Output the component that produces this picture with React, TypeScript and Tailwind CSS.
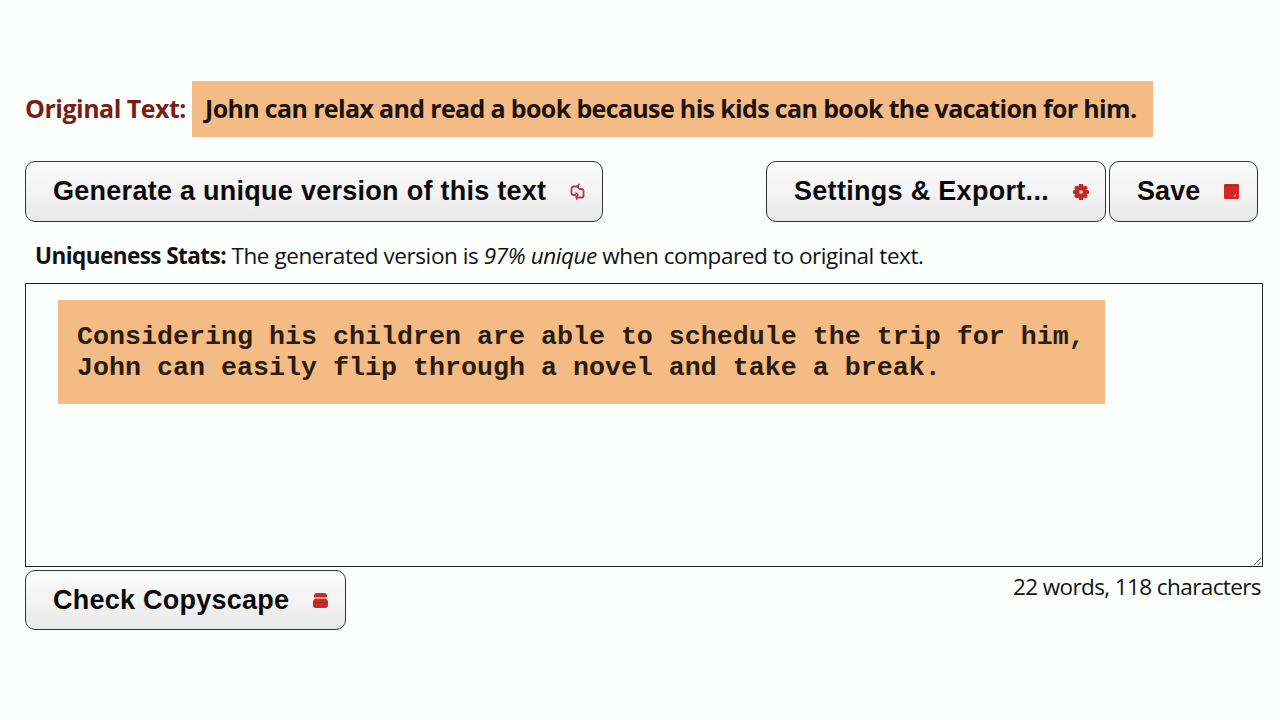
import type { ReactNode } from 'react';

const BTN =
  'flex items-center justify-between h-full rounded-[10px] border border-[#333] bg-gradient-to-b from-[#fbfbfb] via-[#f3f3f3] to-[#e9e9e9] font-["Liberation_Sans",Arial,sans-serif] font-bold text-[27px] text-[#0a0a0a]';

function RefreshIcon() {
  return (
    <svg width="15" height="18" viewBox="0 0 15 18" fill="none" stroke="#b5383c" strokeWidth="1.800">
      <path d="M9 3.500H3.500a2 2 0 0 0-2 2V10a2 2 0 0 0 2 2H6" />
      <path d="M6 14.500h5.500a2 2 0 0 0 2-2V8a2 2 0 0 0-2-2H9" />
      <path d="M9.500 1 7 3.500l2.500 2.500" strokeWidth="1.500" />
      <path d="M5.500 9.500 8 12l-2.500 2.500" strokeWidth="1.500" />
      <path d="M6 14.500 7 17" strokeWidth="1.200" />
    </svg>
  );
}

function GearIcon() {
  return (
    <svg width="16" height="16" viewBox="0 0 16 16">
      <path
        fill="#c02b27"
        fillRule="evenodd"
        d="M6 0h4l.5 2.400 2.200-1 2.100 2.400-1.200 2 2.400.7v3l-2.400.7 1.200 2-2.100 2.400-2.200-1L10 16H6l-.5-2.400-2.200 1-2.100-2.400 1.200-2L0 9.500v-3l2.400-.7-1.200-2 2.100-2.400 2.200 1zM6.500 6.500v3h3v-3z"
      />
    </svg>
  );
}

function SaveIcon() {
  return (
    <svg width="15" height="15" viewBox="0 0 15 15">
      <rect width="15" height="15" rx="1" fill="#d2271f" />
      <rect x="0.5" y="0.5" width="14" height="2" fill="#a8302c" />
      <path d="M9 12.500h3V10z" fill="#f6dcd8" />
    </svg>
  );
}

function PhoneIcon() {
  return (
    <svg width="15" height="15" viewBox="0 0 15 15">
      <path d="M4 0h7a3 3 0 0 1 3 3v1.500H1V3a3 3 0 0 1 3-3z" fill="#c92a22" />
      <path d="M2 5.500h11l2 2.500v4a3 3 0 0 1-3 3H3a3 3 0 0 1-3-3V8z" fill="#cf2a21" />
      <rect x="3" y="4" width="9" height="1.500" fill="#e9a8a0" />
      <rect x="2" y="9" width="11" height="1" fill="#a8201a" />
    </svg>
  );
}

function Btn({ className, children, icon }: { className: string; children: ReactNode; icon: ReactNode }) {
  return (
    <button className={`${BTN} ${className}`}>
      <span>{children}</span>
      {icon}
    </button>
  );
}

export default function App() {
  return (
    <div className='w-[1280px] h-[720px] overflow-hidden bg-[#fdfefe] pt-[81px] pl-[25px] font-["Open_Sans",sans-serif] text-[#111]'>
      {/* original text */}
      <div className="flex items-center h-[56px]">
        <span className="w-[167px] text-[25px] font-bold text-[#7a1d14] tracking-[-0.5px] whitespace-nowrap">Original Text:</span>
        <div className="flex items-center w-[961px] h-full pl-[13px] bg-[#f4bb84] text-[25px] font-bold text-[#1c120c] tracking-[-0.65px] whitespace-nowrap">
          John can relax and read a book because his kids can book the vacation for him.
        </div>
      </div>

      {/* buttons */}
      <div className="flex h-[61px] mt-[24px]">
        <Btn className="w-[578px] pl-[27px] pr-[17px] tracking-[0.27px]" icon={<RefreshIcon />}>
          Generate a unique version of this text
        </Btn>
        <Btn className="w-[340px] ml-[163px] pl-[27px] pr-[16px] tracking-[0.3px]" icon={<GearIcon />}>
          Settings &amp; Export...
        </Btn>
        <Btn className="w-[149px] ml-[3px] pl-[27px] pr-[18px] tracking-[0.1px]" icon={<SaveIcon />}>
          Save
        </Btn>
      </div>

      {/* stats */}
      <p className="mt-[18px] ml-[10px] h-[31px] text-[22.500px] leading-[31px] tracking-[-0.42px] whitespace-nowrap">
        <b className="tracking-[-0.55px]">Uniqueness Stats:</b> The generated version is <i>97% unique</i> when compared to original text.
      </p>

      {/* generated text */}
      <div className="w-[1238px] h-[284px] mt-[12px] pt-[16px] pl-[32px] border border-[#222] bg-[#fdfefe] resize overflow-auto">
        <div className='w-[1047px] h-[104px] pt-[22px] pl-[19px] bg-[#f4bb84] font-["Liberation_Mono","Courier_New",monospace] font-bold text-[26.670px] leading-[31px] text-[#2a1c10]'>
          Considering his children are able to schedule the trip for him,
          <br />
          John can easily flip through a novel and take a break.
        </div>
      </div>

      {/* bottom row */}
      <div className="flex items-start justify-between w-[1236px] mt-[3px]">
        <Btn className="w-[321px] !h-[60px] pl-[27px] pr-[17px] tracking-[0.25px]" icon={<PhoneIcon />}>
          Check Copyscape
        </Btn>
        <span className="mt-[1px] text-[22.500px] leading-[31px] tracking-[-0.6px]">22 words, 118 characters</span>
      </div>
    </div>
  );
}
